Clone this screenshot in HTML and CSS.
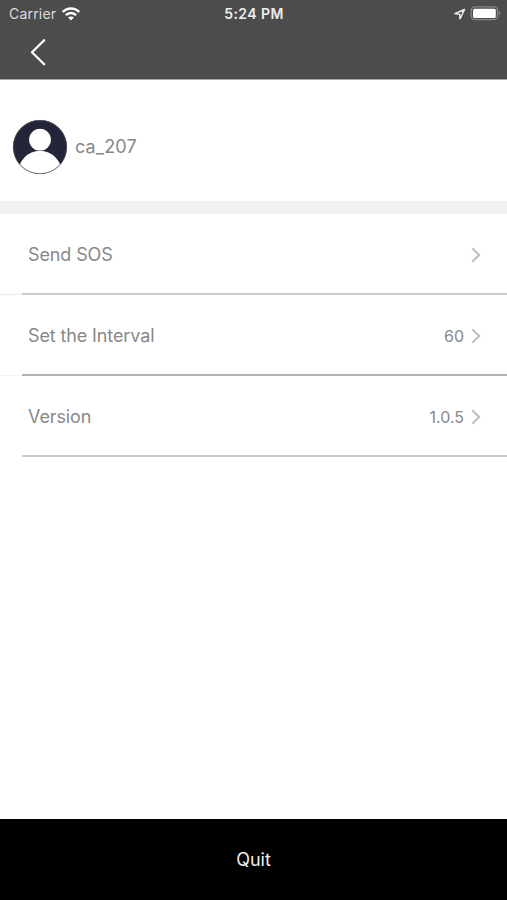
FILE: index.html
```html
<!DOCTYPE html>
<html lang="en">
<head>
<meta charset="utf-8">
<title>Settings</title>
<link rel="stylesheet" href="styles.css">
</head>
<body>
<div class="screen">
  <header class="header">
    <div class="status">
      <div class="status-left">
        <span class="carrier">Carrier</span>
        <svg class="wifi" width="18" height="14" viewBox="0 0 18 14" fill="none" stroke="#fff" stroke-width="2.5"><path d="M.8 4.900C5.3.2 12.700.2 17.200 4.900M3.900 8.200c2.900-3 7.300-3 10.200 0"/><path d="M9 13.500 6.100 10.600c1.600-1.500 4.200-1.500 5.800 0z" fill="#fff" stroke="none"/></svg>
      </div>
      <span class="time">5:24 PM</span>
      <div class="status-right">
        <svg width="12" height="12" viewBox="0 0 12 12" fill="none" stroke="#eee" stroke-width="1.500" stroke-linejoin="round"><path d="M10.500 1.500 1 5.600l4.600.7.500 4.500z"/></svg>
        <svg width="31" height="15" viewBox="0 0 31 15"><rect x="1.200" y=".9" width="26.400" height="12.800" rx="3.600" fill="none" stroke="#858585" stroke-width="1.300"/><rect x="3" y="2.700" width="22.800" height="9.200" rx="1.500" fill="#fff"/><path d="M28.900 5v4.600q1.400-.8 1.400-2.300T28.900 5z" fill="#858585"/></svg>
      </div>
    </div>
    <div class="nav">
      <svg width="16" height="28" viewBox="0 0 16 28" fill="none" stroke="#fff" stroke-width="2.300" stroke-linecap="round" stroke-linejoin="round"><path d="M14.200 2.200 2 14.200 14.200 26.200"/></svg>
    </div>
  </header>
  <section class="profile">
    <svg width="56" height="56" viewBox="0 0 56 56"><defs><clipPath id="disc"><circle cx="28" cy="28" r="27"/></clipPath></defs><g clip-path="url(#disc)"><path d="M0 0h56v56H0z" fill="#25253a"/><circle cx="28" cy="20.700" r="10.900" fill="#fff"/><ellipse cx="28" cy="54.500" rx="22" ry="22.700" fill="#fff"/></g><circle cx="28" cy="28" r="26.700" fill="none" stroke="#55555f" stroke-width=".8"/></svg>
    <span class="name">ca_207</span>
  </section>
  <ul class="list">
    <li class="row"><span class="label">Send SOS</span><svg class="chevron" width="10" height="16" viewBox="0 0 10 16"><path d="m1.300 1.300 6.900 6.700-6.900 6.700"/></svg></li>
    <li class="row dark"><span class="label">Set the Interval</span><span class="value">60</span><svg class="chevron" width="10" height="16" viewBox="0 0 10 16"><path d="m1.300 1.300 6.900 6.700-6.900 6.700"/></svg></li>
    <li class="row last"><span class="label">Version</span><span class="value">1.0.5</span><svg class="chevron" width="10" height="16" viewBox="0 0 10 16"><path d="m1.300 1.300 6.900 6.700-6.900 6.700"/></svg></li>
  </ul>
  <button class="quit">Quit</button>
</div>
</body>
</html>
```
FILE: styles.css
```css
* { box-sizing: border-box; }
body { margin: 0; background: #fff; font-family: Inter, "Liberation Sans", sans-serif; }
svg { display: block; flex: none; }
.screen { height: 900px; display: flex; flex-direction: column; overflow: hidden; }
.header { height: 80px; background: #4c4c4c; border-bottom: 1px solid #a6a6a6; }
.status { height: 27px; display: grid; grid-template-columns: 1fr auto 1fr; align-items: center; padding: 0 6px 0 9px; color: #eee; }
.status-left { display: flex; align-items: center; gap: 6px; }
.carrier { font-size: 14px; line-height: 18px; letter-spacing: .2px; color: #ddd; }
.time { font-size: 14px; line-height: 18px; font-weight: 600; letter-spacing: .45px; margin-right: 2px; }
.status-right { display: flex; align-items: center; justify-content: flex-end; gap: 4px; }
.nav { padding: 11px 0 0 30px; }
.profile { height: 134px; border-bottom: 13px solid #f0f0f0; display: flex; align-items: center; padding: 13px 12px 0; gap: 7px; }
.name { color: #888; font-size: 18px; line-height: 22px; letter-spacing: .15px; }
.list { list-style: none; margin: 0; padding: 0; flex: 1; }
.row { --line: #cacaca; --edge: #ececec; height: 81px; display: flex; align-items: center; padding: 0 26px 0 28px; color: #888; background: linear-gradient(var(--line), var(--line)) 22px 79px / 100% 2px no-repeat, linear-gradient(var(--edge), var(--edge)) 0 80px / 22px 1px no-repeat; }
.row.dark { --line: #b4b4b4; --edge: #f3f3f3; }
.row.last { --edge: #fff; }
.label { flex: 1; font-size: 18px; line-height: 22px; letter-spacing: -.12px; }
.value { font-size: 16px; line-height: 20px; margin-right: 7px; }
.chevron { fill: none; stroke: #bdbdbd; stroke-width: 2; }
.quit { height: 81px; flex: none; border: 0; background: #000; color: #eee; font: 18px/22px Inter, "Liberation Sans", sans-serif; }
```
